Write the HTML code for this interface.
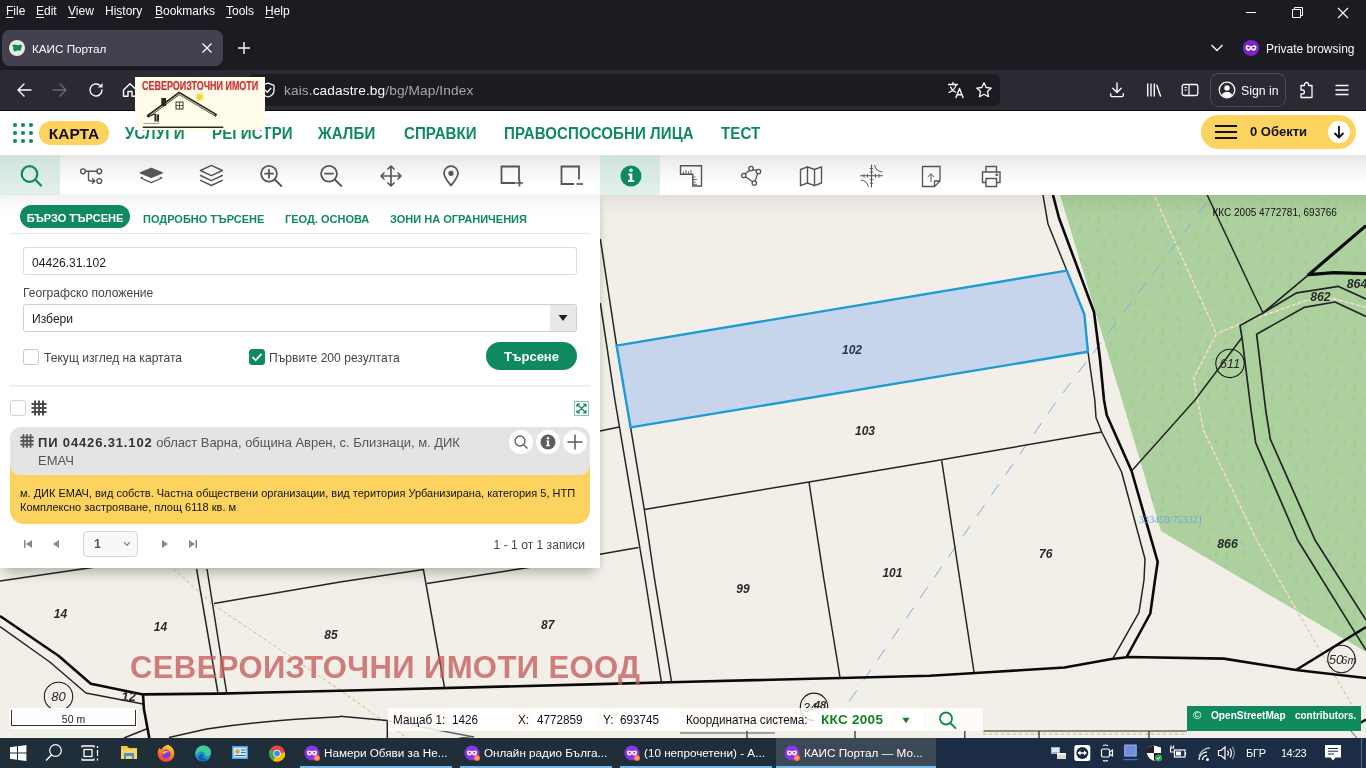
<!DOCTYPE html>
<html lang="bg">
<head>
<meta charset="utf-8">
<title>КАИС Портал</title>
<style>
*{box-sizing:border-box;margin:0;padding:0}
html,body{width:1366px;height:768px;overflow:hidden;background:#f2efe9;font-family:"Liberation Sans",sans-serif;}
.abs{position:absolute}
#root{position:relative;width:1366px;height:768px;overflow:hidden;filter:contrast(1.0001)}
/* browser chrome */
#menubar{left:0;top:0;width:1366px;height:22px;background:#1c1b22;color:#fbfbfe;font-size:12px}
#menubar span{position:absolute;top:4px;white-space:nowrap}
#menubar u{text-decoration-thickness:1px;text-underline-offset:2px}
#tabbar{left:0;top:22px;width:1366px;height:48px;background:#1c1b22}
#tab{left:2px;top:30px;width:221px;height:36px;background:#42414d;border-radius:8px;color:#fbfbfe;font-size:11.700px}
#navbar{left:0;top:70px;width:1366px;height:40px;background:#2b2a33}
#urlbar{left:248px;top:74px;width:752px;height:32px;background:#1c1b22;border-radius:6px}
#url{left:284px;top:83px;font-size:13.7px;color:#a9a8b0;white-space:nowrap;letter-spacing:0.1px}
#url b{font-weight:normal;color:#fbfbfe}
#signin{left:1210px;top:73px;width:76px;height:34px;border:1px solid #4a4953;border-radius:8px}
/* page */
#header{left:0;top:111px;width:1366px;height:44px;background:#fff}
.nav{position:absolute;top:125px;font-weight:bold;font-size:16px;color:#0f8a5f;white-space:nowrap;letter-spacing:0.1px;transform-origin:0 0;transform:scaleX(0.94)}
#karta{left:39px;top:121px;width:70px;height:24px;border-radius:12px;background:#fdd35f;color:#111;font-weight:bold;font-size:15.500px;text-align:center;line-height:25px}
#obekti{left:1201px;top:115px;width:155px;height:34px;border-radius:17px;background:#fdd35f}
#toolbar{left:0;top:155px;width:1366px;height:40px;background:linear-gradient(#e6e6e6 0px,#f1f1f1 10px,#fbfbfb 22px,#fff 30px,#fff 100%)}
.tbactive{position:absolute;top:155px;height:40px;background:linear-gradient(#cfe3db,#e4f1ec)}
/* map */
#map{left:0;top:195px;width:1366px;height:543px;background:#f2efe9}
/* panel */
#panel{left:0;top:195px;width:600px;height:373px;background:linear-gradient(#f2f2f2 0px,#f9f9f9 8px,#fff 17px,#fff 100%);box-shadow:0 9px 12px -5px rgba(0,0,0,.28),2px 0 4px rgba(0,0,0,.05)}
/* taskbar */
#taskbar{left:0;top:738px;width:1366px;height:30px;background:#1f2b38}
</style>
</head>
<body>
<div id="root">
<!-- MAP -->
<div id="map" class="abs">
<svg id="mapsvg" width="1366" height="543" viewBox="0 195 1366 543" style="position:absolute;left:0;top:0">
<!--MAPCONTENT_START-->
<defs>
<pattern id="trees" width="64" height="56" patternUnits="userSpaceOnUse" patternTransform="translate(3 2)">
<g fill="none" stroke="#9cc58f" stroke-width="0.800">
<path d="M6.4 1.7 l1.400 3 h-2.800 Z m0 3 v2"/>
<path d="M13.4 18.6 a1.600 2 0 1 1 0.010 0 v2.400"/>
<path d="M8.3 34.9 a1.600 2 0 1 1 0.010 0 v2.400"/>
<path d="M8.0 46.6 l1.400 3 h-2.800 Z m0 3 v2"/>
<path d="M19.8 7.5 a1.600 2 0 1 1 0.010 0 v2.400"/>
<path d="M24.1 18.7 a1.600 2 0 1 1 0.010 0 v2.400"/>
<path d="M23.3 35.1 l1.400 3 h-2.800 Z m0 3 v2"/>
<path d="M24.6 47.8 a1.600 2 0 1 1 0.010 0 v2.400"/>
<path d="M41.1 11.6 a1.600 2 0 1 1 0.010 0 v2.400"/>
<path d="M44.7 17.7 l1.400 3 h-2.800 Z m0 3 v2"/>
<path d="M44.3 32.4 a1.600 2 0 1 1 0.010 0 v2.400"/>
<path d="M47.2 48.3 a1.600 2 0 1 1 0.010 0 v2.400"/>
<path d="M52.8 1.4 l1.400 3 h-2.800 Z m0 3 v2"/>
<path d="M58.3 24.5 a1.600 2 0 1 1 0.010 0 v2.400"/>
<path d="M53.1 36.7 a1.600 2 0 1 1 0.010 0 v2.400"/>
<path d="M61.3 45.5 l1.400 3 h-2.800 Z m0 3 v2"/>
</g>
</pattern>
<linearGradient id="topsh" x1="0" y1="0" x2="0" y2="1"><stop offset="0" stop-color="#000" stop-opacity="0.060"/><stop offset="1" stop-color="#000" stop-opacity="0"/></linearGradient>
</defs>
<rect x="0" y="195" width="1366" height="543" fill="#f2efe9"/>
<!-- forest -->
<path id="forest" d="M1060 195 L1122 400 L1161 531 L1366 652 V195 Z" fill="#add19e"/>
<path d="M1060 195 L1122 400 L1161 531 L1366 652 V195 Z" fill="url(#trees)"/>
<!-- tan dotted paths -->
<g fill="none" stroke="#f4ebd2" stroke-width="1.300">
<path d="M173.500 569 L212.800 604.300 L340 690 L407 738"/>
<path d="M1154 195 L1199 295 L1216.500 333.800 L1193.700 377.600 L1197.300 400 L1203.700 431 L1256.600 540 L1297.600 612 L1352 705"/>
<path d="M1216.500 333.800 L1240 323.800 L1307.600 300 L1335 299 L1366 307.400"/>
<path d="M983 734 H1187"/>
</g>
<g fill="none" stroke="#c8b388" stroke-width="0.900" stroke-dasharray="3 3">
<path d="M173.500 569 L212.800 604.300 L340 690 L407 738"/>
<path d="M1154 195 L1199 295 L1216.500 333.800 L1193.700 377.600 L1197.300 400 L1203.700 431 L1256.600 540 L1297.600 612 L1352 705"/>
<path d="M1216.500 333.800 L1240 323.800 L1307.600 300 L1335 299 L1366 307.400"/>
<path d="M983 734 H1187"/>
</g>
<!-- blue dashed -->
<path d="M1206.500 203 L1055.700 402.500 L930 583.600 L848.800 701.900 L835 722" fill="none" stroke="#7eaee2" stroke-width="1" stroke-dasharray="13 12"/>
<!-- thin cadastral lines -->
<g fill="none" stroke="#242424" stroke-width="1.500" stroke-linejoin="round">
<path d="M0 581 L82 569 L120 563.500"/>
<path d="M196.600 569 L217.800 692 M207 569 L226.500 692"/>
<path d="M214 603.500 L340 582 L423.400 569.500 L444.500 687.400"/>
<path d="M427 583.600 L519 569 L560 562.500"/>
<path d="M0 626.700 L49.800 662 L85.900 693 L143 703.900"/>
<path d="M340 716.800 C290 719 240 724 206.600 729 L169 737.500"/>
<path d="M124 738 L147 728.700"/>
<path d="M340 716.300 L387.300 720.500 V738"/>
<path d="M387.300 720.500 L474 737" stroke="#666"/>
<!-- road left of parcel -->
<path d="M600.300 238.800 L616.600 345.600 L630.600 427.400 L644.300 509.500 L654.700 580 L671.600 682"/>
<path d="M600.300 302.800 L614.900 400 L645.300 580 L661.400 682"/>
<path d="M600 431 L619.400 426.900 M600 554.300 L638.500 547.600"/>
<path d="M644.300 509.500 L809 482 L930 461.700 L1101.700 431.900"/>
<path d="M809 482 L824 580 L840 677.500"/>
<path d="M941.700 460.500 L959.900 580 L974 672"/>
<!-- right road thin -->
<path d="M1043 195 L1048 224 L1067 271 L1084 315 L1088 352 L1094.800 400 L1096 417.400 L1101.700 432 L1121.600 472 L1145 559 L1144 580 L1139 612.300 L1113 658.300"/>
<!-- forest lines -->
<path d="M1131.600 471 L1195 400 L1242 337.500"/>
<path d="M1207.200 195 L1254.200 295 L1263 312.900"/>
<path d="M1308.700 274.700 L1263 312.900 L1240 325.600 L1242 337.500 L1251 410 L1255.700 442.900 L1297.600 540 L1355 632.600 L1366 650" stroke-width="1.700"/>
<path d="M1263 312.900 L1296.700 292.800 L1338.600 286.400 L1366 299" stroke-width="1.700"/>
<path d="M1366 316.500 L1335 302 L1304 307.400 L1256.600 334.200 L1265.700 410 L1270.300 439.200 L1315 540 L1366 620" stroke-width="1.700"/>
<!-- bottom ticks -->
<path d="M983.500 731 H1187 M964.800 731 V738 M1039 731 V738 M1149 731 V738 M747 731 V738 M855 731 V738" stroke-width="1.200"/>
<path d="M459 738 L474 736.500 M680 733 H775 M1351 731 L1357 738" stroke="#555" stroke-width="1"/>
</g>
<!-- thick lines -->
<g fill="none" stroke="#0a0a0a" stroke-width="2.600" stroke-linejoin="round">
<path d="M0 616 L58.500 655.800 L90.800 683.700 L143 694.400 L219 693.600 L340 690.700 L590 684.400 L680 682 L930 675.700 L992 672 L1064.400 667.500 L1111.700 659 L1129 657 L1223.700 658.600 L1296 670 L1366 678"/>
<path d="M143 694.400 L143.900 709 L149.300 738"/>
<path d="M1053 195 L1059 218 L1094 312 L1100 359 L1104 400 L1106.700 415 L1131.600 471 L1157.700 561.800 L1155 580 L1150.300 613.500 L1126.600 657"/>
<path d="M1366 225.600 L1308.700 274.700 L1333.900 272.600 L1366 273.700" stroke-width="3.200"/>
<path d="M1296 670 L1366 627"/>
<path d="M1360 723 L1366 719.500"/>
</g>
<!-- selected parcel -->
<path id="sel" d="M616.600 345.600 L1066.800 270.600 L1084.400 314.500 L1087.900 351.800 L630.600 427.400 Z" fill="#c6d4ec" stroke="#1e9ad6" stroke-width="2.400" stroke-linejoin="round"/>
<!-- circles -->
<g fill="none" stroke="#1a1a1a" stroke-width="1.100">
<circle cx="58.500" cy="696.400" r="14.200"/>
<circle cx="1230" cy="363.400" r="14.200"/>
<circle cx="1341.400" cy="659" r="13.700"/>
<circle cx="814" cy="706.800" r="13.700"/>
</g>
<!-- labels -->
<g font-family="Liberation Sans, sans-serif" font-size="12" font-style="italic" font-weight="bold" fill="#2a2a2a" text-anchor="middle">
<text x="852" y="353.500" fill="#2b3350">102</text>
<text x="865" y="434.500">103</text>
<text x="892.400" y="577">101</text>
<text x="743" y="592.500">99</text>
<text x="1045.700" y="558.300">76</text>
<text x="1227.500" y="548" font-size="12.300">866</text>
<text x="1320.400" y="300.500" font-size="12.300">862</text>
<text x="1357" y="287.500" font-size="12.300">864</text>
<text x="60.500" y="618">14</text>
<text x="160.500" y="631">14</text>
<text x="331" y="638.700">85</text>
<text x="547.800" y="628.700">87</text>
<text x="128.700" y="701" font-size="13">12</text>
<text x="58.500" y="701" font-weight="normal" font-size="13">80</text>
<text x="1230" y="368" font-weight="normal" font-size="13">611</text>
<text x="1336" y="663.500" font-weight="normal" font-size="13">50</text>
<text x="1349" y="663.500" font-weight="normal" font-size="11">6m</text>
<text x="810" y="711.500" font-weight="normal" font-size="12">34</text>
<text x="820" y="709" font-size="11">48</text>
</g>
<text x="1139" y="522.500" font-family="Liberation Serif, serif" font-size="10.200" fill="#6ea3e0">333459/753321</text>
<text x="1212.500" y="216.300" font-family="Liberation Sans, sans-serif" font-size="10" fill="#111">ККС 2005 4772781, 693766</text>
<rect x="600" y="195" width="766" height="20" fill="url(#topsh)"/>
<!--MAPCONTENT_END-->
</svg>
</div>

<!-- BROWSER CHROME -->
<div id="menubar" class="abs">
<span style="left:6px"><u>F</u>ile</span>
<span style="left:36px"><u>E</u>dit</span>
<span style="left:68px"><u>V</u>iew</span>
<span style="left:105px">Hi<u>s</u>tory</span>
<span style="left:155px"><u>B</u>ookmarks</span>
<span style="left:226px"><u>T</u>ools</span>
<span style="left:265px"><u>H</u>elp</span>
</div>
<div id="tabbar" class="abs"></div>
<div id="tab" class="abs"><span class="abs" style="left:30px;top:12px;white-space:nowrap">КАИС Портал</span></div>
<div id="navbar" class="abs"></div>
<div id="urlbar" class="abs"></div>
<div class="abs" style="left:0;top:110px;width:1366px;height:1px;background:#0c0c0d"></div>
<div id="url" class="abs">kais.<b>cadastre.bg</b>/bg/Map/Index</div>
<div id="signin" class="abs"></div>
<!--CHROMEICONS_START-->
<!-- tab favicon -->
<svg class="abs" style="left:8px;top:39px" width="18" height="18" viewBox="0 0 18 18"><circle cx="9" cy="9" r="8" fill="#e9e9e6"/><path d="M4.2 6.2 L7 5.6 L10 6.2 L13 5.4 L14 7.2 L13.2 9.6 L12.6 11.8 L9.6 11.4 L6.4 12.4 L5 10.6 L5.4 8.4 Z" fill="#128a52"/></svg>
<!-- tab close -->
<svg class="abs" style="left:201px;top:42px" width="12" height="12" viewBox="0 0 12 12"><path d="M1.5 1.5 L10.5 10.5 M10.5 1.5 L1.5 10.5" stroke="#fbfbfe" stroke-width="1.3" fill="none"/></svg>
<!-- new tab -->
<svg class="abs" style="left:237px;top:41px" width="14" height="14" viewBox="0 0 14 14"><path d="M7 1 V13 M1 7 H13" stroke="#fbfbfe" stroke-width="1.4" fill="none"/></svg>
<!-- window controls -->
<svg class="abs" style="left:1240px;top:0px" width="120" height="24" viewBox="0 0 120 24"><path d="M6 12.5 H16" stroke="#fbfbfe" stroke-width="1"/><path d="M52.5 9.5 H60.500 V17.5 H52.5 Z M54.5 9.5 V7.500 H62.5 V15.5 H60.5" stroke="#fbfbfe" stroke-width="1" fill="none"/><path d="M98 8 L108 18 M108 8 L98 18" stroke="#fbfbfe" stroke-width="1.1"/></svg>
<!-- tab list chevron -->
<svg class="abs" style="left:1210px;top:42px" width="14" height="12" viewBox="0 0 14 12"><path d="M1.500 3 L7 8.500 L12.500 3" stroke="#fbfbfe" stroke-width="1.4" fill="none"/></svg>
<!-- private icon -->
<svg class="abs" style="left:1243px;top:40px" width="16" height="16" viewBox="0 0 16 16"><circle cx="8" cy="8" r="8" fill="#7d22cf"/><path d="M2.600 7.2 C2.600 5.6 4 5.200 5.400 5.400 C6.400 5.600 7.200 6.200 8 6.200 C8.800 6.200 9.600 5.600 10.600 5.400 C12 5.200 13.400 5.600 13.400 7.200 C13.400 9.400 12.200 10.800 10.800 10.800 C9.400 10.800 9 9.400 8 9.400 C7 9.400 6.600 10.800 5.200 10.800 C3.800 10.800 2.600 9.400 2.600 7.200 Z" fill="#fff"/><ellipse cx="5.600" cy="7.800" rx="1.500" ry="1" fill="#7d22cf"/><ellipse cx="10.400" cy="7.800" rx="1.500" ry="1" fill="#7d22cf"/></svg>
<div class="abs" style="left:1266px;top:41px;font-size:12.800px;color:#fbfbfe;white-space:nowrap;transform-origin:0 50%;transform:scaleX(0.935)">Private browsing</div>
<!-- back -->
<svg class="abs" style="left:16px;top:82px" width="16" height="16" viewBox="0 0 16 16"><path d="M15 8 H2 M8 2 L2 8 L8 14" stroke="#fbfbfe" stroke-width="1.4" fill="none" stroke-linecap="round" stroke-linejoin="round"/></svg>
<!-- forward -->
<svg class="abs" style="left:52px;top:82px" width="16" height="16" viewBox="0 0 16 16"><path d="M1 8 H14 M8 2 L14 8 L8 14" stroke="#6b6a73" stroke-width="1.4" fill="none" stroke-linecap="round" stroke-linejoin="round"/></svg>
<!-- reload -->
<svg class="abs" style="left:88px;top:82px" width="16" height="16" viewBox="0 0 16 16"><path d="M14 8 A6 6 0 1 1 11.500 3.100" stroke="#fbfbfe" stroke-width="1.4" fill="none" stroke-linecap="round"/><path d="M14.500 1 V5.500 H10 Z" fill="#fbfbfe"/></svg>
<!-- home -->
<svg class="abs" style="left:122px;top:82px" width="16" height="16" viewBox="0 0 16 16"><path d="M1.500 8 L8 1.800 L14.500 8 V14.200 H10 V9.500 H6 V14.200 H1.500 Z" stroke="#fbfbfe" stroke-width="1.4" fill="none" stroke-linejoin="round"/></svg>
<!-- shield -->
<svg class="abs" style="left:260px;top:82px" width="16" height="16" viewBox="0 0 16 16"><path d="M8 1.200 L14 3.400 V8 C14 11.500 11.500 14 8 15 C4.500 14 2 11.500 2 8 V3.400 Z" stroke="#fbfbfe" stroke-width="1.300" fill="none" stroke-linejoin="round"/><path d="M5 8 L7.300 10.200 L11.200 6" stroke="#fbfbfe" stroke-width="1.300" fill="none"/></svg>
<!-- translate -->
<svg class="abs" style="left:947px;top:81px" width="18" height="18" viewBox="0 0 18 18"><path d="M1.500 3.500 H10.500 M6 1.500 V3.500 M9 3.500 C8.500 7 5.500 10 2 11.500 M3.500 6 C4.500 8.500 6.500 10.200 8.500 11" stroke="#fbfbfe" stroke-width="1.300" fill="none" stroke-linecap="round"/><path d="M9 16.500 L12.500 7.500 L16 16.500 M10.200 13.700 H14.800" stroke="#fbfbfe" stroke-width="1.400" fill="none" stroke-linecap="round" stroke-linejoin="round"/></svg>
<!-- star -->
<svg class="abs" style="left:975px;top:81px" width="18" height="18" viewBox="0 0 18 18"><path d="M9 1.800 L11.200 6.500 L16.300 7.100 L12.500 10.600 L13.500 15.700 L9 13.200 L4.500 15.700 L5.500 10.600 L1.700 7.100 L6.800 6.500 Z" stroke="#fbfbfe" stroke-width="1.300" fill="none" stroke-linejoin="round"/></svg>
<!-- download -->
<svg class="abs" style="left:1109px;top:82px" width="16" height="16" viewBox="0 0 16 16"><path d="M8 1 V10.300 M3.800 6.300 L8 10.500 L12.200 6.300 M1.700 11.800 V13.300 Q1.700 14.600 3 14.600 H13 Q14.300 14.600 14.300 13.300 V11.800" stroke="#fbfbfe" stroke-width="1.400" fill="none" stroke-linecap="round" stroke-linejoin="round"/></svg>
<!-- library -->
<svg class="abs" style="left:1146px;top:82px" width="16" height="16" viewBox="0 0 16 16"><path d="M1.700 2 V14 M5 2 V14 M8.300 2 V14 M10.800 3.200 L14.500 14" stroke="#fbfbfe" stroke-width="1.400" fill="none" stroke-linecap="round"/></svg>
<!-- sidebar -->
<svg class="abs" style="left:1181px;top:82px" width="18" height="16" viewBox="0 0 18 16"><rect x="1.200" y="2.500" width="15.600" height="11" rx="1.800" stroke="#fbfbfe" stroke-width="1.300" fill="none"/><path d="M8 2.500 V13.500 M3.500 5.500 H5.800 M3.500 8 H5.800" stroke="#fbfbfe" stroke-width="1.200" fill="none"/></svg>
<!-- account -->
<svg class="abs" style="left:1218px;top:81px" width="18" height="18" viewBox="0 0 18 18"><circle cx="9" cy="9" r="7.800" stroke="#fbfbfe" stroke-width="1.300" fill="none"/><circle cx="9" cy="7" r="2.700" fill="#fbfbfe"/><path d="M3.800 14 C4.800 11.500 7 11 9 11 C11 11 13.200 11.500 14.200 14 C12.500 15.800 10.800 16.300 9 16.300 C7.200 16.300 5.500 15.800 3.800 14 Z" fill="#fbfbfe"/></svg>
<div class="abs" style="left:1241px;top:84px;font-size:12.300px;color:#fbfbfe;white-space:nowrap">Sign in</div>
<!-- extensions -->
<svg class="abs" style="left:1298px;top:81px" width="17" height="18" viewBox="0 0 17 18"><path d="M6.500 4.500 V3.500 A2 2 0 0 1 10.500 3.500 V4.500 H14 V16.500 H3 V12.800 H4.500 A1.900 1.900 0 0 0 4.500 9 H3 V4.500 Z" stroke="#fbfbfe" stroke-width="1.300" fill="none" stroke-linejoin="round"/></svg>
<!-- hamburger -->
<svg class="abs" style="left:1334px;top:82px" width="16" height="16" viewBox="0 0 16 16"><path d="M1.500 3.500 H14.500 M1.500 8 H14.500 M1.500 12.500 H14.500" stroke="#fbfbfe" stroke-width="1.400" fill="none"/></svg>
<!--CHROMEICONS_END-->

<!-- PAGE HEADER -->
<div id="header" class="abs"></div>
<div id="karta" class="abs">КАРТА</div>
<div class="nav" id="n0" style="left:125px">УСЛУГИ</div>
<div class="nav" id="n1" style="left:212px">РЕГИСТРИ</div>
<div class="nav" id="n2" style="left:318px">ЖАЛБИ</div>
<div class="nav" id="n3" style="left:404px">СПРАВКИ</div>
<div class="nav" id="n4" style="left:504px">ПРАВОСПОСОБНИ ЛИЦА</div>
<div class="nav" id="n5" style="left:721px">ТЕСТ</div>
<div id="obekti" class="abs"></div>
<!--HEADERICONS_START-->
<!-- nine dots -->
<svg class="abs" style="left:12px;top:122px" width="22" height="22" viewBox="0 0 22 22" fill="#0f8a5f"><circle cx="3" cy="3" r="2.100"/><circle cx="11" cy="3" r="2.100"/><circle cx="19" cy="3" r="2.100"/><circle cx="3" cy="11" r="2.100"/><circle cx="11" cy="11" r="2.100"/><circle cx="19" cy="11" r="2.100"/><circle cx="3" cy="19" r="2.100"/><circle cx="11" cy="19" r="2.100"/><circle cx="19" cy="19" r="2.100"/></svg>
<!-- obekti content -->
<svg class="abs" style="left:1215px;top:124px" width="24" height="16" viewBox="0 0 24 16"><path d="M0 2 H22 M0 8 H22 M0 14 H22" stroke="#111" stroke-width="2.200"/></svg>
<div class="abs" style="left:1250px;top:124px;font-size:13px;font-weight:bold;color:#111;white-space:nowrap">0 Обекти</div>
<svg class="abs" style="left:1328px;top:121px" width="22" height="22" viewBox="0 0 22 22"><circle cx="11" cy="11" r="11" fill="#fff"/><path d="M11 5 V16.500 M6.500 12 L11 16.500 L15.500 12" stroke="#111" stroke-width="1.800" fill="none"/></svg>
<!--HEADERICONS_END-->

<!-- TOOLBAR -->
<div id="toolbar" class="abs"></div>
<div class="tbactive" style="left:0;width:60px"></div>
<div class="tbactive" style="left:600px;width:60px"></div>
<!--TOOLBARICONS_START-->
<svg class="abs" style="left:0;top:155px" width="1366" height="40" viewBox="0 155 1366 40" fill="none" stroke="#555" stroke-width="1.500" stroke-linecap="round" stroke-linejoin="round">
<!-- 1 search (green) -->
<g stroke="#0f8a5f" stroke-width="2.200"><circle cx="29.500" cy="174" r="7.800"/><path d="M35.300 179.800 L41 185.500"/></g>
<!-- 2 flow -->
<g stroke-width="1.400"><circle cx="83" cy="171.300" r="2.400"/><circle cx="99.300" cy="171.300" r="2.400"/><circle cx="99.300" cy="181" r="2.400"/><path d="M85.500 171.300 H96.800 M88.500 171.300 V179 Q88.500 181 90.500 181 H94.500 M92.500 178.800 L94.800 181 L92.500 183.200"/></g>
<!-- 3 layers filled -->
<g stroke-width="1.300"><path d="M151.300 168.300 L162.300 172.800 L151.300 177.300 L140.300 172.800 Z" fill="#565656" stroke="#565656"/><path d="M142.500 177.300 L140.800 178 L151.300 182.600 L161.800 178 L160.100 177.300"/></g>
<!-- 4 layers outline -->
<g stroke-width="1.400"><path d="M211.400 165.400 L222.300 170.500 L211.400 175.600 L200.500 170.500 Z"/><path d="M200.500 175.500 L211.400 180.700 L222.300 175.500"/><path d="M200.500 180.300 L211.400 185.500 L222.300 180.300"/></g>
<!-- 5 zoom in -->
<g stroke-width="1.800"><circle cx="269" cy="173.700" r="7.900"/><path d="M274.800 179.500 L281.300 186 M265 173.700 H273 M269 169.700 V177.700"/></g>
<!-- 6 zoom out -->
<g stroke-width="1.800"><circle cx="329" cy="173.700" r="7.900"/><path d="M334.800 179.500 L341.300 186 M325 173.700 H333"/></g>
<!-- 7 move -->
<g stroke-width="1.650"><path d="M391 166 V186 M381 176 H401 M388 169 L391 166 L394 169 M388 183 L391 186 L394 183 M384 173 L381 176 L384 179 M398 173 L401 176 L398 179"/></g>
<!-- 8 pin -->
<g stroke-width="1.750"><path d="M451 185.500 C447 180.500 444 177 444 173.200 A7 7 0 0 1 458 173.200 C458 177 455 180.500 451 185.500 Z"/><circle cx="451" cy="173.300" r="1.800" fill="#555"/></g>
<!-- 9 rect plus -->
<g stroke-width="1.800" stroke-linecap="butt" stroke-linejoin="miter"><path d="M519 180.500 V166.500 H501.500 V183 H515.500"/><path d="M519.500 179.500 V186.500 M516 183 H523" stroke-width="1.700"/></g>
<!-- 10 rect minus -->
<g stroke-width="1.800" stroke-linecap="butt" stroke-linejoin="miter"><path d="M579 179.500 V166.500 H561.500 V184 H574"/><path d="M576.500 184 H583" stroke-width="1.700"/></g>
<!-- 11 info green -->
<g stroke="none"><circle cx="631" cy="176" r="10.500" fill="#0f8a5f"/><circle cx="631" cy="170.200" r="1.700" fill="#fff"/><path d="M628.300 173.500 H632.300 V180 H634 V182 H628 V180 H629.700 V175.500 H628.300 Z" fill="#fff"/></g>
<!-- 12 ruler -->
<g stroke-width="1.400" stroke-linecap="butt" stroke-linejoin="miter"><path d="M680.500 165.700 H701.500 V186 H692.800 V174.300 H680.500 Z"/><path d="M683.500 174 V171.500 M686 174 V170.200 M688.500 174 V171.500 M691 174 V170.200 M693 177 H695.500 M693 179.500 H697 M693 182 H695.500 M693 184.300 H697" stroke-width="0.900"/></g>
<!-- 13 polygon nodes -->
<g stroke-width="1.300"><circle cx="751" cy="168.600" r="2.200"/><circle cx="758.500" cy="171.500" r="2.200"/><circle cx="754.300" cy="183" r="2.200"/><circle cx="743.800" cy="175.500" r="2.200"/><path d="M753 169.400 L756.400 170.700 M757.700 173.600 L755 181 M752.500 181.700 L745.500 176.800 M745.300 173.800 L749.500 170.200"/></g>
<!-- 14 map -->
<g stroke-width="1.400"><path d="M800.500 169.500 L807.500 166.800 L814.500 169.500 L821.500 166.800 V183 L814.500 185.700 L807.500 183 L800.500 185.700 Z M807.500 166.800 V183 M814.500 169.500 V185.700"/></g>
<!-- 15 grid cross -->
<g stroke-width="1.100"><path d="M871.500 165 V187 M860.500 175.800 H882.500"/><path d="M864 174.300 V177.300 M867.500 174.300 V177.300 M875.500 174.300 V177.300 M879 174.300 V177.300 M870.200 168.500 H872.800 M870.200 172 H872.800 M870.200 179.600 H872.800 M870.200 183.200 H872.800" stroke-width="0.900"/><path d="M874.700 165.500 Q875.800 171.300 881.800 172 M868.300 186.500 Q867.200 180.700 861.200 180" stroke-width="1"/></g>
<!-- 16 export -->
<g stroke-width="1.300" stroke-linejoin="miter"><path d="M922.500 166.500 H940 V181 L934.500 186.500 H922.500 Z M940 181 H934.500 V186.500"/><path d="M931 182 V174 M928 176.800 L931 173.800 L934 176.800" stroke-width="1"/></g>
<!-- 17 print -->
<g stroke-width="1.400" stroke-linejoin="miter"><path d="M986 172 V166.500 H996.500 V172 M986 182.500 H982.500 V172 H1000 V182.500 H996.500 M986 178.500 H996.500 V186.500 H986 Z"/><circle cx="996.800" cy="174.800" r="0.700" fill="#555"/></g>
</svg>
<!--TOOLBARICONS_END-->

<!-- PANEL -->
<div id="panel" class="abs">
<!--PANELCONTENT_START-->
<style>
#panel{font-size:12.100px;color:#222}
#panel .t{position:absolute;white-space:nowrap}
.ptab{position:absolute;top:13px;font-size:11px;font-weight:bold;color:#0f8a5f;white-space:nowrap;line-height:22px;height:22px}
.hr{position:absolute;left:10px;width:580px;height:1px;background:#e4e4e4}
.cb{position:absolute;width:16px;height:16px;border:1px solid #c9c9c9;border-radius:3px;background:#fff}
.rbtn{position:absolute;top:235px;width:24px;height:24px;border-radius:12px;background:#fff}
</style>
<div class="ptab" id="pt1" style="left:20px;top:10px;width:110px;height:23px;line-height:26px;border-radius:12px;background:#0f8a5f;color:#fff;text-align:center">БЪРЗО ТЪРСЕНЕ</div>
<div class="ptab" id="pt2" style="left:143px">ПОДРОБНО ТЪРСЕНЕ</div>
<div class="ptab" id="pt3" style="left:285px">ГЕОД. ОСНОВА</div>
<div class="ptab" id="pt4" style="left:390px">ЗОНИ НА ОГРАНИЧЕНИЯ</div>
<div class="hr" style="top:38px"></div>
<div class="abs" style="left:23px;top:52px;width:554px;height:28px;border:1px solid #dcdcdc;border-radius:3px"></div>
<div class="t" id="inp" style="left:32px;top:61px">04426.31.102</div>
<div class="t" id="geo" style="left:23px;top:91px;color:#444">Географско положение</div>
<div class="abs" style="left:23px;top:109px;width:554px;height:28px;border:1px solid #cfcfcf;border-radius:3px;overflow:hidden"><div class="abs" style="right:0;top:0;width:26px;height:26px;background:#e9e9e9"></div></div>
<svg class="abs" style="left:558px;top:119px" width="10" height="8" viewBox="0 0 10 8"><path d="M0.500 1 H9.500 L5 7 Z" fill="#222"/></svg>
<div class="t" id="izb" style="left:32px;top:117px">Избери</div>
<div class="cb" style="left:23px;top:154px"></div>
<div class="t" id="cb1t" style="left:44px;top:156px;color:#444">Текущ изглед на картата</div>
<div class="cb" style="left:249px;top:154px;background:#0f8a5f;border-color:#0f8a5f"></div>
<svg class="abs" style="left:249px;top:154px" width="16" height="16" viewBox="0 0 16 16"><path d="M3.500 8.200 L6.700 11.300 L12.500 4.800" stroke="#fff" stroke-width="1.800" fill="none"/></svg>
<div class="t" id="cb2t" style="left:269px;top:156px;color:#444">Първите 200 резултата</div>
<div class="abs" id="btn" style="left:486px;top:147px;width:91px;height:28px;border-radius:14px;background:#0f8a5f;color:#fff;font-weight:bold;font-size:13px;text-align:center;line-height:30px">Търсене</div>
<div class="hr" style="top:190px;height:2px;background:#efefef"></div>
<div class="cb" style="left:10px;top:205px;border-color:#d5d5d5"></div>
<svg class="abs" style="left:30px;top:204px" width="18" height="18" viewBox="0 0 18 18"><path d="M5 1.500 V16.500 M9 1.500 V16.500 M13 1.500 V16.500 M1.500 5 H16.500 M1.500 9 H16.500 M1.500 13 H16.500" stroke="#4d4d4d" stroke-width="2" fill="none"/></svg>
<!-- expand icon -->
<svg class="abs" style="left:574px;top:206px" width="15" height="15" viewBox="0 0 15 15"><rect x="0.500" y="0.500" width="14" height="14" fill="#fff" stroke="#0f8a5f" stroke-width="1" stroke-dasharray="1 1"/><path d="M3 3 L12 12 M12 3 L3 12 M3 3 H6 M3 3 V6 M12 3 H9 M12 3 V6 M3 12 H6 M3 12 V9 M12 12 H9 M12 12 V9" stroke="#0f8a5f" stroke-width="1.200" fill="none"/></svg>
<!-- result card -->
<div class="abs" style="left:10px;top:252px;width:580px;height:77px;border-radius:0 0 14px 14px;background:#fdd35f"></div>
<div class="abs" style="left:10px;top:232px;width:580px;height:48px;border-radius:10px 10px 10px 10px;background:#e4e4e4"></div>
<svg class="abs" style="left:19px;top:238px" width="16" height="16" viewBox="0 0 18 18"><path d="M5 1.500 V16.500 M9 1.500 V16.500 M13 1.500 V16.500 M1.500 5 H16.500 M1.500 9 H16.500 M1.500 13 H16.500" stroke="#555" stroke-width="2" fill="none"/></svg>
<div class="t" id="r1" style="left:38px;top:240px;font-size:13px;color:#555;letter-spacing:-0.05px"><b style="color:#333;letter-spacing:0.85px">ПИ 04426.31.102</b> област Варна, община Аврен, с. Близнаци, м. ДИК</div>
<div class="t" id="r2" style="left:38px;top:258px;font-size:13px;color:#555">ЕМАЧ</div>
<div class="rbtn" style="left:509px"></div><div class="rbtn" style="left:536px"></div><div class="rbtn" style="left:563px"></div>
<svg class="abs" style="left:509px;top:235px" width="78" height="24" viewBox="0 0 78 24" fill="none" stroke="#5a5a5a" stroke-width="1.300"><circle cx="11" cy="11" r="5"/><path d="M14.600 14.600 L18.500 18.500"/><circle cx="39" cy="12" r="7.500" fill="#5e5e5e" stroke="none"/><circle cx="39" cy="8.200" r="1.200" fill="#fff" stroke="none"/><path d="M37.300 10.500 H40 V15 H41 V16.300 H37 V15 H38 V11.800 H37.300 Z" fill="#fff" stroke="none"/><path d="M66 4.500 V19.500 M58.500 12 H73.500" stroke-width="1.500"/></svg>
<div class="t" id="y1" style="left:20px;top:292px;font-size:11px;color:#111">м. ДИК ЕМАЧ, вид собств. Частна обществени организации, вид територия Урбанизирана, категория 5, НТП</div>
<div class="t" id="y2" style="left:20px;top:306px;font-size:11px;color:#111">Комплексно застрояване, площ 6118 кв. м</div>
<!-- pager -->
<svg class="abs" style="left:20px;top:341px" width="185" height="16" viewBox="20 341 185 16" fill="#8a8a8a"><path d="M24 345 H25.500 V353 H24 Z M32 345 V353 L26 349 Z"/><path d="M59 345 V353 L53 349 Z"/><path d="M162 345 V353 L168 349 Z"/><path d="M189 345 V353 L195 349 Z M195.500 345 H197 V353 H195.500 Z"/></svg>
<div class="abs" style="left:83px;top:336px;width:55px;height:26px;border:1px solid #d6d6d6;border-radius:4px;background:#f8f8f8"></div>
<div class="t" style="left:94px;top:342px;font-size:12.500px;font-weight:bold;color:#555">1</div>
<svg class="abs" style="left:123px;top:346px" width="8" height="6" viewBox="0 0 8 6"><path d="M1 1.200 L4 4.200 L7 1.200" stroke="#777" stroke-width="1.200" fill="none"/></svg>
<div class="t" id="pg" style="right:15px;top:343px;color:#444">1 - 1 от 1 записи</div>
<!--PANELCONTENT_END-->
</div>

<!--OVERLAYS_START-->
<!-- logo overlay -->
<div class="abs" id="logo" style="left:135px;top:77px;width:130px;height:53px;background:#fffde9;overflow:hidden">
<div class="abs" id="logotxt" style="left:7px;top:1px;font-size:13px;font-weight:bold;color:#c23a3a;white-space:nowrap;transform-origin:0 0;transform:scaleX(0.69);text-shadow:0 0 2px #e9a0a0">СЕВЕРОИЗТОЧНИ ИМОТИ</div>
<svg class="abs" style="left:0;top:0" width="130" height="53" viewBox="135 77 130 53"><circle cx="199.700" cy="97" r="4.500" fill="#f6ef9a"/><circle cx="199.700" cy="97" r="2.800" fill="#e9dc3a"/><path d="M147.500 116.500 L179.200 93.300 L216.500 115.500" stroke="#2a2622" stroke-width="3" fill="none"/><path d="M149.500 115.700 L179.200 93.900 L214.500 114.800" stroke="#fffde9" stroke-width="0.800" fill="none"/><rect x="161.300" y="98" width="4.700" height="8" fill="#2a2622"/><rect x="176" y="102" width="7" height="7" fill="none" stroke="#3a3632" stroke-width="1"/><path d="M179.500 102 V109 M176 105.500 H183" stroke="#3a3632" stroke-width="0.800"/><rect x="154.500" y="114.500" width="4.500" height="7" fill="#2a2622"/><path d="M156.700 115 V121" stroke="#fffde9" stroke-width="0.600"/><path d="M147 116.500 L156 114" stroke="#2a2622" stroke-width="1.200"/><path d="M143.500 123.500 H159" stroke="#8a8680" stroke-width="0.800"/><path d="M142.800 127.300 H223.300" stroke="#2a2622" stroke-width="1.400"/></svg>
</div>
<!-- watermark -->
<div class="abs" id="wm" style="left:130px;top:650px;font-size:31px;font-weight:bold;color:rgba(196,92,92,0.78);white-space:nowrap;letter-spacing:0.4px">СЕВЕРОИЗТОЧНИ ИМОТИ ЕООД</div>
<!-- scale bar -->
<div class="abs" style="left:9px;top:708px;width:128px;height:21px;background:rgba(255,255,255,0.92);border-radius:3px"></div>
<div class="abs" id="scale" style="left:11px;top:710px;width:125px;height:16px;border:1px solid #333;border-top:none;font-size:10.500px;color:#222;text-align:center;line-height:19px">50 m</div>
<!-- coord bar -->
<div class="abs" style="left:388px;top:708px;width:595px;height:23px;background:rgba(255,255,255,0.82)"></div>
<div class="abs" style="left:446px;top:709px;width:66px;height:21px;background:#fff"></div>
<div class="abs" style="left:532px;top:709px;width:64px;height:21px;background:#fff"></div>
<div class="abs" style="left:616px;top:709px;width:64px;height:21px;background:#fff"></div>
<div class="abs" style="left:814px;top:709px;width:108px;height:21px;background:#fff"></div>
<div class="abs cbt" id="c1" style="left:393px">Мащаб 1:</div>
<div class="abs cbt" id="c2" style="left:452px">1426</div>
<div class="abs cbt" id="c3" style="left:518px">X:</div>
<div class="abs cbt" id="c4" style="left:537px">4772859</div>
<div class="abs cbt" id="c5" style="left:603px">Y:</div>
<div class="abs cbt" id="c6" style="left:620px">693745</div>
<div class="abs cbt" id="c7" style="left:686px">Координатна система:</div>
<div class="abs cbt" id="c8" style="left:821px;font-weight:bold;font-size:13.500px;letter-spacing:0.3px;color:#11801f;top:712px;transform:none">ККС 2005</div>
<svg class="abs" style="left:902px;top:717px" width="8" height="7" viewBox="0 0 10 8"><path d="M0.500 0.500 H9.500 L5 7.500 Z" fill="#11801f"/></svg>
<svg class="abs" style="left:937px;top:709px" width="22" height="22" viewBox="937 709 22 22"><circle cx="946" cy="718.500" r="6" fill="none" stroke="#0f8a5f" stroke-width="1.800"/><path d="M950.300 723 L956 728.600" stroke="#0f8a5f" stroke-width="2"/></svg>
<!-- OSM -->
<div class="abs" id="osm" style="left:1187px;top:706px;width:174px;height:25px;background:#0f8a5f;color:#fff;font-size:10.800px;font-weight:bold;line-height:19px;white-space:nowrap"><span class="abs" style="left:6px;top:0;font-size:11.500px;font-weight:normal">©</span><span class="abs" id="osm1" style="left:24px;top:0;transform-origin:0 50%;transform:scaleX(0.935)">OpenStreetMap</span><span class="abs" id="osm2" style="left:108px;top:0;transform-origin:0 50%;transform:scaleX(0.92)">contributors.</span></div>
<style>.cbt{top:713px;font-size:12.400px;color:#111;white-space:nowrap;transform-origin:0 50%;transform:scaleX(0.945)}</style>
<!--OVERLAYS_END-->

<!-- TASKBAR -->
<div id="taskbar" class="abs">
<!--TASKBARCONTENT_START-->
<style>
#taskbar{background:linear-gradient(90deg,#1f2e38 0%,#1f2e38 52%,#1b2c44 70%,#1b2c44 100%)}
.tk{position:absolute;top:8px;font-size:11.700px;color:#fff;white-space:nowrap}
.ul{position:absolute;top:28px;height:2px;background:#76b9ed}
</style>
<div class="abs" style="left:776px;top:0;width:160px;height:30px;background:#3c4854"></div>
<div class="ul" style="left:300px;width:152px"></div>
<div class="ul" style="left:460px;width:152px"></div>
<div class="ul" style="left:620px;width:152px"></div>
<div class="ul" style="left:776px;width:160px"></div>
<div class="tk" id="t1" style="left:324px">Намери Обяви за Не...</div>
<div class="tk" id="t2" style="left:484px">Онлайн радио Бълга...</div>
<div class="tk" id="t3" style="left:644px">(10 непрочетени) - А...</div>
<div class="tk" id="t4" style="left:804px">КАИС Портал — Мо...</div>
<div class="tk" id="t5" style="left:1246px;font-size:11px;top:9px;letter-spacing:-0.2px">БГР</div>
<div class="tk" id="t6" style="left:1281px;font-size:11px;top:9px;letter-spacing:-0.5px">14:23</div>
<svg class="abs" style="left:0;top:0" width="1366" height="30" viewBox="0 738 1366 30">
<!-- windows -->
<path d="M10 747.300 L17 746.300 V752.600 H10 Z M18 746.200 L26.400 745 V752.600 H18 Z M10 753.500 H17 V759.800 L10 758.800 Z M18 753.500 H26.400 V761.100 L18 759.900 Z" fill="#fff"/>
<!-- search -->
<circle cx="55.500" cy="750.500" r="5.800" fill="none" stroke="#fff" stroke-width="1.200"/><path d="M51.500 755 L46 760.500" stroke="#fff" stroke-width="1.400"/>
<!-- task view -->
<g fill="none" stroke="#fff" stroke-width="1.300"><rect x="84" y="749.500" width="8" height="7"/><path d="M82 746 H94 M82 760 H94 M82 745.500 V747.500 M94 745.500 V747.500 M82 758.500 V760.500 M94 758.500 V760.500 M97.500 746 V748 M97.500 750 V756 M97.500 758.500 V760.500"/></g>
<!-- folder -->
<path d="M121 746 H127 L129 748 H137 V759 H121 Z" fill="#f5c44a"/><path d="M121 749.500 H137 V759 H121 Z" fill="#fbd667"/><path d="M124 753 H134 V759 H124 Z" fill="#4a90d6"/><path d="M126 756 H132 V759 H126 Z" fill="#fbd667"/>
<!-- firefox -->
<defs><linearGradient id="ffg" x1="0.700" y1="0" x2="0.300" y2="1"><stop offset="0" stop-color="#ffd43a"/><stop offset="0.450" stop-color="#ff8a1e"/><stop offset="1" stop-color="#f0304a"/></linearGradient></defs>
<path d="M166 745.500 C167.500 744.500 168.800 744.600 169.500 745.800 C172.500 747 174.300 750 174.300 753.500 C174.300 758.200 170.600 761.800 166 761.800 C161.400 761.800 157.700 758.200 157.700 753.500 C157.700 751 158.600 749 160 747.600 C160.100 748.800 160.600 749.600 161.400 750 C162 748 163.800 746.200 166 745.500 Z" fill="url(#ffg)"/><circle cx="166.300" cy="754" r="4.300" fill="#7a3be0"/><path d="M162 752.500 C163.500 750.800 167.500 750.300 170 752.200 C167.800 751.800 165.500 752.600 164.300 754.200 C163.500 754 162.500 753.500 162 752.500 Z" fill="#ffb52e"/>
<!-- edge -->
<circle cx="203" cy="753.500" r="8" fill="#1f8fd6"/><path d="M195.500 756 C195 750 199 745.500 204 745.500 C208 745.500 211 748.500 211 752 C211 754.500 209 756 207 756 C205.500 756 204.500 755 205 753.500 C203 750 198 751 195.500 756 Z" fill="#3ccf8e"/><path d="M198 758 C199 755 201 753.500 203 754 C202 757 204 760 208 759 C205 762 200 761.500 198 758 Z" fill="#0c5fa8"/>
<!-- control panel -->
<rect x="232" y="746" width="16" height="13" fill="#4aa3e8"/><rect x="233.500" y="747.500" width="13" height="10" fill="#cfe8fb"/><circle cx="237.500" cy="751.500" r="2.200" fill="#e0a030"/><path d="M241 750 H245.500 M241 752.500 H245.500 M235 755.500 H245.500" stroke="#2a6fb5" stroke-width="1.200"/>
<!-- chrome -->
<circle cx="277" cy="753.500" r="8" fill="#e8453c"/><path d="M277 753.500 L270.100 749.500 A8 8 0 0 0 273 760.400 Z" fill="#34a853"/><path d="M277 753.500 L273 760.400 A8 8 0 0 0 284.900 752 L281 753.500 Z" fill="#fbbc05"/><path d="M273 760.400 A8 8 0 0 0 285 753.500 H277 Z" fill="#fbbc05"/><path d="M270.100 749.500 A8 8 0 0 0 273 760.400 L277 753.500 Z" fill="#34a853"/><circle cx="277" cy="753.500" r="3.700" fill="#fff"/><circle cx="277" cy="753.500" r="2.900" fill="#4285f4"/>
<!-- private app icons -->
<g><circle cx="312" cy="753" r="7.500" fill="#8f34e8"/><path d="M307 752.200 C307 750.600 308.500 750.300 309.700 750.600 C310.700 750.900 311.300 751.300 312 751.300 C312.700 751.300 313.300 750.900 314.300 750.600 C315.500 750.300 317 750.600 317 752.200 C317 754.200 316 755.500 314.700 755.500 C313.400 755.500 313 754.200 312 754.200 C311 754.200 310.600 755.500 309.300 755.500 C308 755.500 307 754.200 307 752.200 Z" fill="#fff"/><ellipse cx="309.700" cy="752.800" rx="1.300" ry="0.900" fill="#8f34e8"/><ellipse cx="314.300" cy="752.800" rx="1.300" ry="0.900" fill="#8f34e8"/><circle cx="317" cy="758" r="3" fill="#ff7a3a"/><circle cx="317" cy="758" r="1.600" fill="#ffb24a"/></g>
<g transform="translate(160 0)"><circle cx="312" cy="753" r="7.500" fill="#8f34e8"/><path d="M307 752.200 C307 750.600 308.500 750.300 309.700 750.600 C310.700 750.900 311.300 751.300 312 751.300 C312.700 751.300 313.300 750.900 314.300 750.600 C315.500 750.300 317 750.600 317 752.200 C317 754.200 316 755.500 314.700 755.500 C313.400 755.500 313 754.200 312 754.200 C311 754.200 310.600 755.500 309.300 755.500 C308 755.500 307 754.200 307 752.200 Z" fill="#fff"/><ellipse cx="309.700" cy="752.800" rx="1.300" ry="0.900" fill="#8f34e8"/><ellipse cx="314.300" cy="752.800" rx="1.300" ry="0.900" fill="#8f34e8"/><circle cx="317" cy="758" r="3" fill="#ff7a3a"/><circle cx="317" cy="758" r="1.600" fill="#ffb24a"/></g>
<g transform="translate(320 0)"><circle cx="312" cy="753" r="7.500" fill="#8f34e8"/><path d="M307 752.200 C307 750.600 308.500 750.300 309.700 750.600 C310.700 750.900 311.300 751.300 312 751.300 C312.700 751.300 313.300 750.900 314.300 750.600 C315.500 750.300 317 750.600 317 752.200 C317 754.200 316 755.500 314.700 755.500 C313.400 755.500 313 754.200 312 754.200 C311 754.200 310.600 755.500 309.300 755.500 C308 755.500 307 754.200 307 752.200 Z" fill="#fff"/><ellipse cx="309.700" cy="752.800" rx="1.300" ry="0.900" fill="#8f34e8"/><ellipse cx="314.300" cy="752.800" rx="1.300" ry="0.900" fill="#8f34e8"/><circle cx="317" cy="758" r="3" fill="#ff7a3a"/><circle cx="317" cy="758" r="1.600" fill="#ffb24a"/></g>
<g transform="translate(480 0)"><circle cx="312" cy="753" r="7.500" fill="#8f34e8"/><path d="M307 752.200 C307 750.600 308.500 750.300 309.700 750.600 C310.700 750.900 311.300 751.300 312 751.300 C312.700 751.300 313.300 750.900 314.300 750.600 C315.500 750.300 317 750.600 317 752.200 C317 754.200 316 755.500 314.700 755.500 C313.400 755.500 313 754.200 312 754.200 C311 754.200 310.600 755.500 309.300 755.500 C308 755.500 307 754.200 307 752.200 Z" fill="#fff"/><ellipse cx="309.700" cy="752.800" rx="1.300" ry="0.900" fill="#8f34e8"/><ellipse cx="314.300" cy="752.800" rx="1.300" ry="0.900" fill="#8f34e8"/><circle cx="317" cy="758" r="3" fill="#ff7a3a"/><circle cx="317" cy="758" r="1.600" fill="#ffb24a"/></g>

<!-- tray -->
<g><rect x="1051" y="747" width="9" height="7" fill="#9fb4cc"/><rect x="1052" y="748" width="7" height="4" fill="#dfe9f5"/><rect x="1057" y="753" width="9" height="6" fill="#d8d8d0"/><rect x="1057" y="753" width="9" height="2" fill="#f5f5ef"/></g>
<rect x="1074.300" y="745" width="16" height="16" rx="2.500" fill="#fff"/><circle cx="1082.300" cy="753" r="6" fill="#1b2940"/><path d="M1077.500 753 L1080.500 750.500 V752.200 H1084 V750.500 L1087 753 L1084 755.500 V753.800 H1080.500 V755.500 Z" fill="#fff"/>
<g fill="none" stroke="#fff" stroke-width="1.200"><rect x="1101.500" y="749" width="8" height="8" rx="1.500"/><path d="M1109.500 752 L1112.500 750 V756 L1109.500 754 M1103 745.500 Q1105.500 744.500 1108 745.500 M1103 760.500 Q1105.500 761.500 1108 760.500"/></g>
<rect x="1124.700" y="745" width="11.500" height="11" fill="#6f8fdc" stroke="#9db4ec" stroke-width="1"/><path d="M1123.500 759.600 H1137.500" stroke="#4a6fd0" stroke-width="1.300"/>
<path d="M1154 745.500 L1161 747.500 V752.500 C1161 756.500 1158 759.500 1154 761 C1150 759.500 1147 756.500 1147 752.500 V747.500 Z" fill="#fff"/><path d="M1154 745.500 V753 H1147 V747.500 Z M1154 753 H1161 C1161 756.500 1158 759.500 1154 761 Z" fill="#222"/><circle cx="1158.500" cy="758" r="3.500" fill="#2ea84a"/><path d="M1156.800 758 L1158 759.300 L1160.300 756.800" stroke="#fff" stroke-width="1" fill="none"/>
<g fill="none" stroke="#fff" stroke-width="1.200"><rect x="1174.500" y="750" width="10.500" height="7"/><path d="M1185.500 752 V755"/><path d="M1170.500 748 V752 H1174 M1171 745.500 V748 M1173.500 745.500 V748 M1170.500 748 H1174"/></g><rect x="1176" y="751.500" width="5" height="4" fill="#fff"/>
<g fill="none" stroke="#fff" stroke-width="1.300"><path d="M1199 760 A8 8 0 0 1 1207 752" opacity="0.900"/><path d="M1199 756 A11.500 11.500 0 0 1 1210 748" opacity="0.700"/><path d="M1202.500 760 A4.500 4.500 0 0 1 1207 755.500"/></g><circle cx="1207.500" cy="759.500" r="1.500" fill="#fff"/>
<g fill="none" stroke="#fff" stroke-width="1.200"><path d="M1218.500 750.500 H1221 L1225 747 V759 L1221 755.500 H1218.500 Z"/><path d="M1227.500 750.500 Q1229.500 753 1227.500 755.500 M1229.800 748.500 Q1233 753 1229.800 757.500" /><path d="M1232.300 746.800 Q1236.500 753 1232.300 759.200" opacity="0.500"/></g>
<path d="M1325 745 H1341 V757.500 H1335.500 L1333 760.500 L1330.500 757.500 H1325 Z" fill="#fff"/><path d="M1328 748.500 H1338 M1328 751.200 H1338 M1328 754 H1334" stroke="#1b2940" stroke-width="1"/>
<path d="M1361.500 738 V768" stroke="#5a6a80" stroke-width="1"/>
</svg>
<!--TASKBARCONTENT_END-->
</div>
</div>
</body>
</html>
